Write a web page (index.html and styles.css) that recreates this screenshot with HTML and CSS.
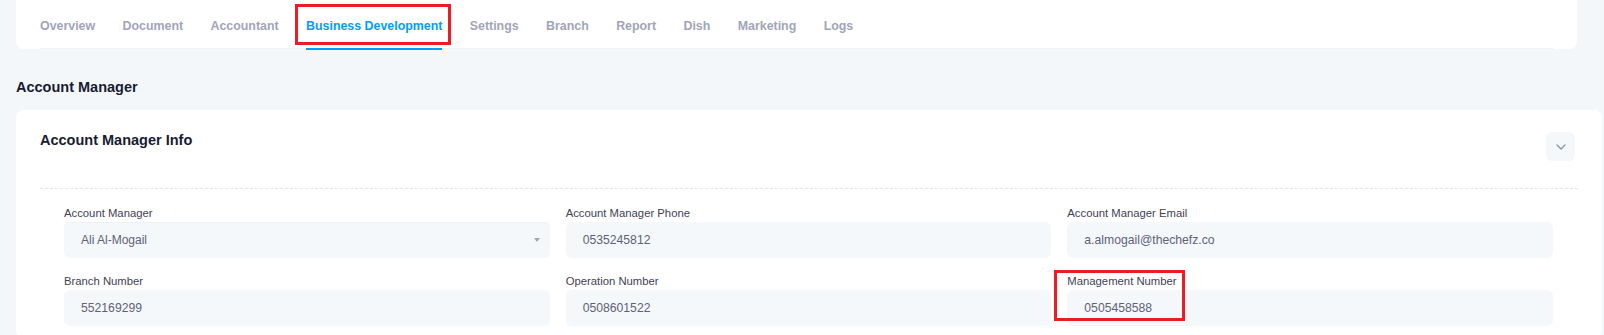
FILE: index.html
```html
<!DOCTYPE html>
<html lang="en">
<head>
    <meta charset="UTF-8">
    <meta name="viewport" content="width=device-width, initial-scale=1.0">
    <title>Business Development - Account Manager</title>
    <link rel="stylesheet" href="styles.css">
</head>
<body>
    <!-- Pestañas -->
    <div class="tabs-card">
        <nav class="tabs">
            <a class="tab">Overview</a>
            <a class="tab">Document</a>
            <a class="tab">Accountant</a>
            <a class="tab active marked">Business Development</a>
            <a class="tab">Settings</a>
            <a class="tab">Branch</a>
            <a class="tab">Report</a>
            <a class="tab">Dish</a>
            <a class="tab">Marketing</a>
            <a class="tab">Logs</a>
        </nav>
    </div>

    <h2 class="section-title">Account Manager</h2>

    <div class="card">
        <div class="card-header">
            <h3 class="card-title">Account Manager Info</h3>
            <button class="collapse-btn" type="button">
                <svg width="10" height="6" viewBox="0 0 10 6"><path d="M1 1l4 4 4-4" fill="none" stroke="#8c90a6" stroke-width="1.3" stroke-linecap="round" stroke-linejoin="round"/></svg>
            </button>
        </div>

        <div class="form-grid">
            <div class="field">
                <label>Account Manager</label>
                <div class="input select">Ali Al-Mogail<span class="caret"></span></div>
            </div>
            <div class="field">
                <label>Account Manager Phone</label>
                <div class="input">0535245812</div>
            </div>
            <div class="field">
                <label>Account Manager Email</label>
                <div class="input">a.almogail@thechefz.co</div>
            </div>
            <div class="field">
                <label>Branch Number</label>
                <div class="input">552169299</div>
            </div>
            <div class="field">
                <label>Operation Number</label>
                <div class="input">0508601522</div>
            </div>
            <div class="field marked-field">
                <label>Management Number</label>
                <div class="input">0505458588</div>
            </div>
        </div>
    </div>
</body>
</html>
```

FILE: styles.css
```css
/* Base */
body {
    margin: 0;
    padding: 0 2px 0 16px;
    background-color: #f4f7fa;
    font-family: "Liberation Sans", Arial, sans-serif;
    overflow: hidden;
}

/* Tarjeta de pestañas */
.tabs-card {
    margin-right: 25px;
    padding: 0 24px;
    background-color: #ffffff;
    border-radius: 0 0 8px 8px;
}

.tabs {
    display: flex;
    gap: 27.4px;
    border-bottom: 1px solid #eff2f5;
}

.tab {
    position: relative;
    padding: 19px 0 14px;
    margin-bottom: -2px;
    line-height: 15px;
    font-size: 12.4px;
    font-weight: bold;
    color: #a1a5b7;
    border-bottom: 2px solid transparent;
    white-space: nowrap;
}

.tab.active {
    color: #009ef7;
    border-bottom-color: #009ef7;
}

/* Recuadro rojo de anotación */
.marked::before {
    content: "";
    position: absolute;
    top: 4px;
    left: -11px;
    right: -9px;
    height: 41px;
    border: 3px solid #ed1c24;
    box-sizing: border-box;
}

/* Títulos */
.section-title {
    margin: 28px 0 13px;
    font-size: 14.5px;
    line-height: 20px;
    font-weight: bold;
    color: #181c32;
}

/* Tarjeta principal */
.card {
    padding: 0 24px 12px;
    background-color: #ffffff;
    border-radius: 8px;
}

.card-header {
    display: flex;
    justify-content: space-between;
    align-items: flex-start;
    padding: 20px 0 27px;
    border-bottom: 1px dashed #e4e6ef;
}

.card-title {
    margin: 0;
    font-size: 14.5px;
    line-height: 20px;
    font-weight: bold;
    color: #181c32;
}

.collapse-btn {
    display: flex;
    justify-content: center;
    align-items: center;
    width: 29px;
    height: 29px;
    margin: 2px 3px 0 0;
    padding: 0;
    border: none;
    border-radius: 6px;
    background-color: #f5f8fa;
}

/* Formulario */
.form-grid {
    display: grid;
    grid-template-columns: repeat(3, 1fr);
    column-gap: 16px;
    row-gap: 16px;
    padding: 17px 25px 0 24px;
}

.field {
    position: relative;
}

.field label {
    display: block;
    margin-bottom: 2px;
    font-size: 11.3px;
    line-height: 14px;
    color: #3f4254;
}

.input {
    position: relative;
    height: 36px;
    padding: 0 17px;
    line-height: 36px;
    font-size: 12.2px;
    color: #5e6278;
    background-color: #f5f8fa;
    border-radius: 6px;
}

.select {
    font-size: 12px;
    box-shadow: inset 0 1px 0 #edf0f4;
}

.caret {
    position: absolute;
    right: 10px;
    top: 16px;
    width: 0;
    height: 0;
    border-left: 3px solid transparent;
    border-right: 3px solid transparent;
    border-top: 4px solid #a3a6b4;
}

.marked-field::after {
    content: "";
    position: absolute;
    top: -4px;
    left: -13px;
    width: 131px;
    height: 51px;
    border: 3px solid #ed1c24;
    box-sizing: border-box;
    z-index: 1;
}
```
